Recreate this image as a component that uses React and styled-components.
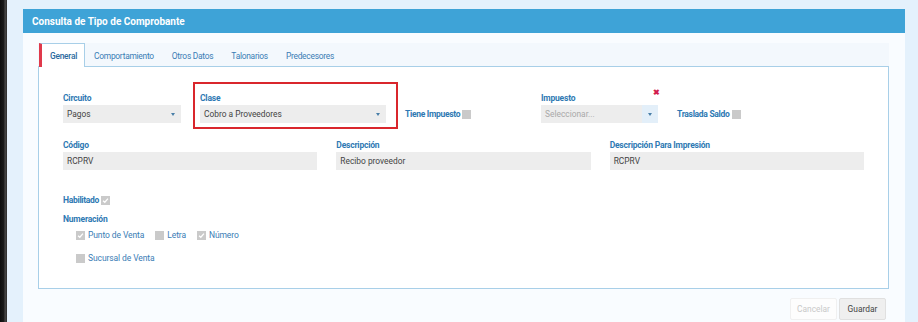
import styled, { createGlobalStyle } from "styled-components";

const GlobalStyle = createGlobalStyle`
  html, body {
    margin: 0;
    padding: 0;
    background: #e4f1fc;
    font-family: Roboto, "Liberation Sans", Arial, sans-serif;
  }
`;

const Page = styled.div`
  display: flex;
  width: 918px;
  height: 322px;
  overflow: hidden;
`;

const DarkStrip = styled.div`
  width: 7px;
  flex-shrink: 0;
  background: linear-gradient(to right, #0d0d0d 0, #1b1b1b 4px, #4a4a4a 5px, #2c2c2c 7px);
`;

const Main = styled.div`
  flex: 1;
  padding: 9px 13px 0 16px;
`;

const Panel = styled.div`
  height: 100%;
  background: #f9fcff;
`;

const PanelHeader = styled.div`
  height: 24px;
  background: #3ea3d7;
  color: #fff;
  font-size: 10px;
  font-weight: 700;
  display: flex;
  align-items: center;
  padding-left: 9px;
`;

const PanelBody = styled.div`
  padding: 10px 16px 0 15px;
`;

const TabBar = styled.div`
  display: flex;
  height: 23px;
  background: #f3f8fd;
`;

const Tab = styled.div`
  display: flex;
  align-items: center;
  font-size: 8.4px;
  letter-spacing: -0.25px;
  color: ${({ active }) => (active ? "#2a6a9e" : "#3a7db5")};
  font-weight: ${({ active }) => (active ? 500 : 400)};
  background: ${({ active }) => (active ? "#fff" : "transparent")};
  border: 1px solid ${({ active }) => (active ? "#a8cfe8" : "transparent")};
  border-left: ${({ active }) => (active ? "3px solid #e0394b" : "1px solid transparent")};
  border-bottom: none;
  margin-left: ${({ active }) => (active ? "1px" : "0")};
  padding-left: ${({ active }) => (active ? "8px" : "8px")};
  padding-right: ${({ active }) => (active ? "7px" : "8px")};
  margin-bottom: -1px;
  position: relative;
  z-index: 1;
`;

const TabBox = styled.div`
  height: 223px;
  box-sizing: border-box;
  background: #fff;
  border: 1px solid #a8cfe8;
  padding: 25px 24px 0 24px;
`;

const TopRow = styled.div`
  display: grid;
  grid-template-columns: 118px 186px 117px 117px auto;
  column-gap: 19px;
  align-items: end;
`;

const Field = styled.div`
  display: flex;
  flex-direction: column;
  position: relative;
`;

const Highlight = styled(Field)`
  &::after {
    content: "";
    position: absolute;
    top: -10px;
    left: -7px;
    right: -12px;
    bottom: -6px;
    border: 2px solid #d9262c;
    pointer-events: none;
  }
`;

const Label = styled.div`
  font-size: 8.5px;
  letter-spacing: -0.2px;
  font-weight: 700;
  color: #2e79b3;
  line-height: 12px;
  margin-bottom: 1px;
  white-space: nowrap;
`;

const Box = styled.div`
  height: 18px;
  background: #ededed;
  display: flex;
  align-items: center;
  padding-left: 4px;
  font-size: 8.4px;
  color: ${({ placeholder }) => (placeholder ? "#a9a9a9" : "#444")};
  position: relative;
`;

const Caret = styled.span`
  position: absolute;
  right: 0;
  top: 0;
  bottom: 0;
  width: 16px;
  display: flex;
  align-items: center;
  justify-content: center;
  background: ${({ tinted }) => (tinted ? "#e3eff9" : "transparent")};
  &::before {
    content: "";
    border-left: 2.5px solid transparent;
    border-right: 2.5px solid transparent;
    border-top: 3px solid #4a7fa8;
  }
`;

const ClearMark = styled.span`
  position: absolute;
  right: -2px;
  top: -4px;
  font-size: 8px;
  font-weight: 700;
  color: #d21d4f;
  line-height: 10px;
`;

const InlineCheck = styled.div`
  display: flex;
  align-items: center;
  height: ${({ compact }) => (compact ? "12px" : "18px")};
  gap: 2px;
  font-size: 8.5px;
  letter-spacing: -0.3px;
  font-weight: 700;
  color: #2e79b3;
  white-space: nowrap;
`;

const Check = styled.span`
  width: 9px;
  height: 9px;
  background: #cacaca;
  display: inline-flex;
  align-items: center;
  justify-content: center;
  flex-shrink: 0;
`;

const ThreeRow = styled.div`
  display: grid;
  grid-template-columns: repeat(3, 1fr);
  column-gap: 19px;
  margin-top: 16px;
  width: 801px;
`;

const Section = styled.div`
  margin-top: 24px;
  display: flex;
  flex-direction: column;
  gap: 7px;
`;

const OptionRow = styled.div`
  display: flex;
  gap: 11px;
  padding-left: 13px;
  margin-top: ${({ spaced }) => (spaced ? "13px" : "4px")};
`;

const Option = styled.div`
  display: flex;
  align-items: center;
  gap: 3px;
  font-size: 8.5px;
  letter-spacing: -0.1px;
  color: #3a7db5;
`;

const Footer = styled.div`
  display: flex;
  justify-content: flex-end;
  padding: 9px 3px 0 0;
  gap: 2px;
`;

const Button = styled.button`
  height: 22px;
  width: 47px;
  padding: 0;
  font-family: inherit;
  font-size: 8.4px;
  border: 1px solid ${({ primary }) => (primary ? "#e0e0e0" : "#f0f0f0")};
  background: ${({ primary }) => (primary ? "#efefef" : "#fdfdfd")};
  color: ${({ primary }) => (primary ? "#444" : "#c9c9c9")};
  border-radius: 2px;
`;

const CheckMark = () => (
  <svg width="7" height="7" viewBox="0 0 8 8">
    <path d="M1.2 4.2 L3.2 6 L6.8 1.8" fill="none" stroke="#fff" strokeWidth="1.4" />
  </svg>
);

const CheckBox = ({ checked }) => <Check>{checked && <CheckMark />}</Check>;

const tabs = ["General", "Comportamiento", "Otros Datos", "Talonarios", "Predecesores"];

export default function App() {
  return (
    <>
      <GlobalStyle />
      <Page>
        <DarkStrip />
        <Main>
          <Panel>
            <PanelHeader>Consulta de Tipo de Comprobante</PanelHeader>
            <PanelBody>
              <TabBar>
                {tabs.map((t, i) => (
                  <Tab key={t} active={i === 0}>
                    {t}
                  </Tab>
                ))}
              </TabBar>
              <TabBox>
                <TopRow>
                  <Field>
                    <Label>Circuito</Label>
                    <Box>
                      Pagos
                      <Caret />
                    </Box>
                  </Field>
                  <Highlight>
                    <Label>Clase</Label>
                    <Box>
                      Cobro a Proveedores
                      <Caret />
                    </Box>
                  </Highlight>
                  <InlineCheck>
                    Tiene Impuesto <CheckBox />
                  </InlineCheck>
                  <Field>
                    <ClearMark>✖</ClearMark>
                    <Label>Impuesto</Label>
                    <Box placeholder>
                      Seleccionar...
                      <Caret tinted />
                    </Box>
                  </Field>
                  <InlineCheck>
                    Traslada Saldo <CheckBox />
                  </InlineCheck>
                </TopRow>
                <ThreeRow>
                  <Field>
                    <Label>Código</Label>
                    <Box>RCPRV</Box>
                  </Field>
                  <Field>
                    <Label>Descripción</Label>
                    <Box>Recibo proveedor</Box>
                  </Field>
                  <Field>
                    <Label>Descripción Para Impresión</Label>
                    <Box>RCPRV</Box>
                  </Field>
                </ThreeRow>
                <Section>
                  <InlineCheck compact>
                    Habilitado <CheckBox checked />
                  </InlineCheck>
                  <Label>Numeración</Label>
                </Section>
                <OptionRow>
                  <Option>
                    <CheckBox checked /> Punto de Venta
                  </Option>
                  <Option>
                    <CheckBox /> Letra
                  </Option>
                  <Option>
                    <CheckBox checked /> Número
                  </Option>
                </OptionRow>
                <OptionRow spaced>
                  <Option>
                    <CheckBox /> Sucursal de Venta
                  </Option>
                </OptionRow>
              </TabBox>
              <Footer>
                <Button>Cancelar</Button>
                <Button primary>Guardar</Button>
              </Footer>
            </PanelBody>
          </Panel>
        </Main>
      </Page>
    </>
  );
}
